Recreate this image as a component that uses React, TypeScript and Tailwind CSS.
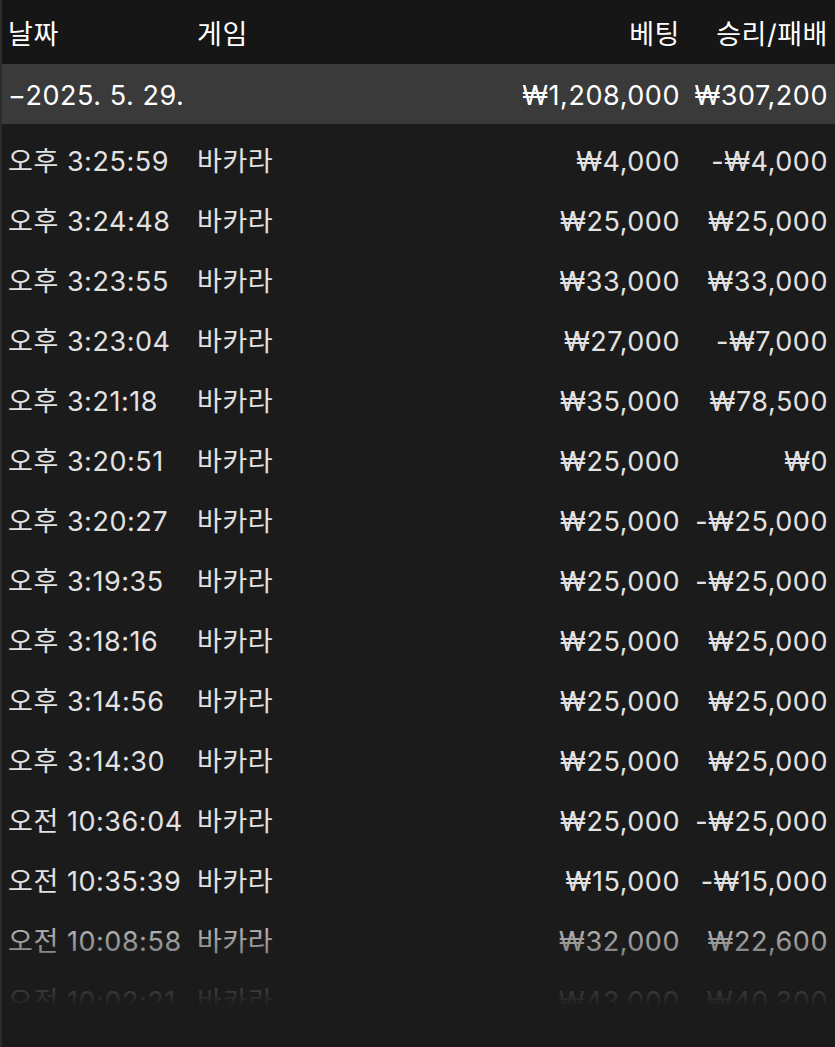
const rows: [string, string, string, string][] = [
  ["오후 3:25:59", "바카라", "₩4,000", "-₩4,000"],
  ["오후 3:24:48", "바카라", "₩25,000", "₩25,000"],
  ["오후 3:23:55", "바카라", "₩33,000", "₩33,000"],
  ["오후 3:23:04", "바카라", "₩27,000", "-₩7,000"],
  ["오후 3:21:18", "바카라", "₩35,000", "₩78,500"],
  ["오후 3:20:51", "바카라", "₩25,000", "₩0"],
  ["오후 3:20:27", "바카라", "₩25,000", "-₩25,000"],
  ["오후 3:19:35", "바카라", "₩25,000", "-₩25,000"],
  ["오후 3:18:16", "바카라", "₩25,000", "₩25,000"],
  ["오후 3:14:56", "바카라", "₩25,000", "₩25,000"],
  ["오후 3:14:30", "바카라", "₩25,000", "₩25,000"],
  ["오전 10:36:04", "바카라", "₩25,000", "-₩25,000"],
  ["오전 10:35:39", "바카라", "₩15,000", "-₩15,000"],
  ["오전 10:08:58", "바카라", "₩32,000", "₩22,600"],
  ["오전 10:02:21", "바카라", "₩43,000", "₩40,300"],
];

const cols = "grid grid-cols-[189px_1fr_200px_148px] items-center pl-1.5 pr-[7px]";

export default function App() {
  return (
    <div
      className="w-[835px] h-[1047px] bg-[#1b1b1b] border-l-2 border-[#2c2c2c] text-[27px] tracking-[0.02em] leading-none overflow-hidden"
      style={{ fontFamily: 'Inter, "Noto Sans CJK KR", sans-serif' }}
    >
      <div className={`${cols} h-16 pt-1 bg-[#161616] text-white`}>
        <span>날짜</span>
        <span>게임</span>
        <span className="text-right">베팅</span>
        <span className="text-right">승리/패배</span>
      </div>
      <div className={`${cols} h-[60px] pt-0.5 bg-[#3a3a3a] text-white`}>
        <span className="whitespace-nowrap">−2025. 5. 29.</span>
        <span></span>
        <span className="text-right">₩1,208,000</span>
        <span className="text-right">₩307,200</span>
      </div>
      <div className="relative mt-1.5 h-[876px] overflow-hidden">
        {rows.map((r) => (
          <div key={r[0]} className={`${cols} h-[60px] pt-0.5 text-[#e2e2e2]`}>
            <span className="whitespace-nowrap">{r[0]}</span>
            <span>{r[1]}</span>
            <span className="text-right">{r[2]}</span>
            <span className="text-right whitespace-nowrap">{r[3]}</span>
          </div>
        ))}
        <div className="absolute inset-x-0 bottom-0 h-[100px] bg-gradient-to-b from-transparent to-[#1b1b1b]" />
      </div>
    </div>
  );
}
